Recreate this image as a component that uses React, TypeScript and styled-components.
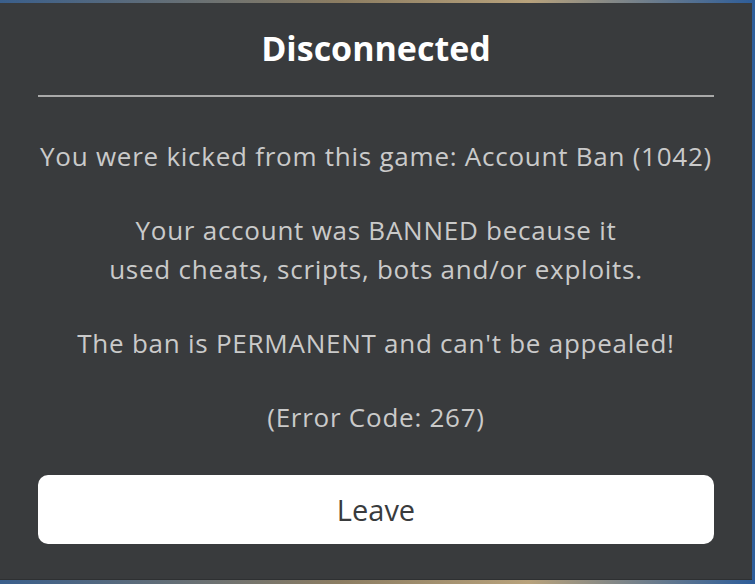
import React from 'react'
import styled, { createGlobalStyle } from 'styled-components'

const GlobalStyle = createGlobalStyle`
  html, body {
    margin: 0;
    padding: 0;
    width: 755px;
    height: 584px;
    overflow: hidden;
  }

  body {
    background: linear-gradient(90deg, #3a5f8c 0%, #8c7d62 45%, #b8a27c 70%, #2d5d9a 100%);
    font-family: "Open Sans", "Noto Sans", sans-serif;
  }
`

const Backdrop = styled.div`
  height: 584px;
  padding: 3px 3px 4px 0;
  box-sizing: border-box;
  display: flex;
`

const Panel = styled.div`
  flex: 1;
  background-color: #393b3d;
  display: flex;
  flex-direction: column;
  padding: 0 38px;
  box-shadow: inset 0 -1px 0 #2e3032;
`

const Title = styled.h1`
  margin: 0;
  height: 92px;
  display: flex;
  align-items: center;
  justify-content: center;
  padding-bottom: 2px;
  box-sizing: border-box;
  color: #ffffff;
  font-size: 34px;
  font-weight: 700;
`

const Divider = styled.hr`
  margin: 0;
  border: none;
  height: 2px;
  background-color: #a9a9a9;
`

const Body = styled.div`
  display: flex;
  flex-direction: column;
  gap: 35px;
  padding-top: 40px;
`

const Paragraph = styled.p`
  margin: 0;
  text-align: center;
  color: #cacaca;
  font-size: 26px;
  line-height: 39px;
  letter-spacing: 0.75px;
  white-space: nowrap;
`

const LeaveButton = styled.button`
  margin-top: 38px;
  height: 69px;
  border: none;
  border-radius: 10px;
  background-color: #ffffff;
  color: #393b3d;
  font-family: inherit;
  font-size: 29px;
  cursor: pointer;
`

export default function App() {
  return (
    <>
      <GlobalStyle />
      <Backdrop>
        <Panel>
          <Title>Disconnected</Title>
          <Divider />
          <Body>
            <Paragraph>You were kicked from this game: Account Ban (1042)</Paragraph>
            <Paragraph>
              Your account was BANNED because it
              <br />
              used cheats, scripts, bots and/or exploits.
            </Paragraph>
            <Paragraph>The ban is PERMANENT and can't be appealed!</Paragraph>
            <Paragraph>(Error Code: 267)</Paragraph>
          </Body>
          <LeaveButton>Leave</LeaveButton>
        </Panel>
      </Backdrop>
    </>
  )
}
